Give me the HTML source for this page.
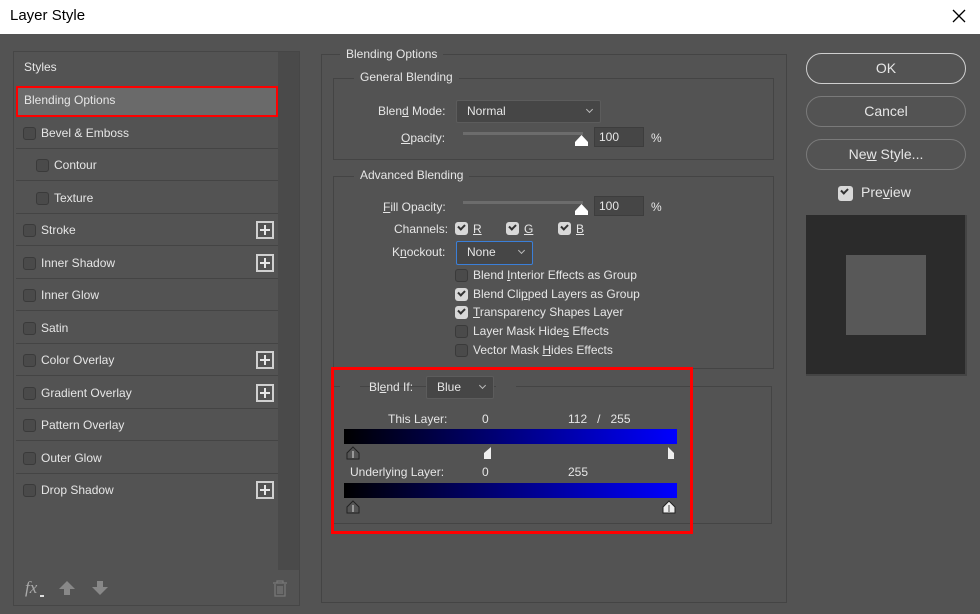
<!DOCTYPE html>
<html><head><meta charset="utf-8"><style>
*{margin:0;padding:0;box-sizing:border-box}
body{width:980px;height:614px;background:#535353;font-family:"Liberation Sans",sans-serif;font-size:12px;color:#e6e6e6;position:relative;overflow:hidden}
.a{position:absolute;white-space:nowrap}
.title{left:0;top:0;width:980px;height:34px;background:#fff;color:#000;font-size:15px}
.box{position:absolute;border:1px solid #444}
.leg{position:absolute;background:#535353;padding:0 6px;color:#e6e6e6}
.cb{position:absolute;width:13px;height:13px;border:1px solid #3a3a3a;border-radius:3px;background:#4a4a4a}
.cbc{position:absolute;width:13px;height:13px;border-radius:3px;background:#d8d8d8}
.cbc::after{content:"";position:absolute;left:3px;top:2px;width:5px;height:3px;border-left:2px solid #333;border-bottom:2px solid #333;transform:rotate(-45deg)}
.row{position:absolute;left:16px;width:262px;height:32px;border-bottom:1px solid #444}
.plus{position:absolute;width:18px;height:18px;border:2px solid #d0d0d0;left:255px}
.plus::before{content:"";position:absolute;left:6px;top:2px;width:2px;height:10px;background:#e8e8e8}
.plus::after{content:"";position:absolute;left:2px;top:6px;width:10px;height:2px;background:#e8e8e8}
.btn{position:absolute;left:806px;width:160px;height:31px;border:1px solid #7a7a7a;border-radius:16px;text-align:center;line-height:29px;font-size:14px}
.sel{position:absolute;background:#464646;border:1px solid #5c5c5c;border-radius:2px;padding-left:10px;line-height:20px}
.sel::after{content:"";position:absolute;right:8px;top:6px;width:4px;height:4px;border-right:1px solid #bbb;border-bottom:1px solid #bbb;transform:rotate(45deg)}
.inp{position:absolute;width:50px;height:20px;background:#464646;border:1px solid #3d3d3d;padding-left:4px;line-height:18px}
.grad{position:absolute;left:344px;width:333px;background:linear-gradient(to right,#000,#000080 50%,#0000ff)}
u{text-decoration:underline}
</style></head><body>
<div class="a title"><span style="position:absolute;left:10px;top:7px">Layer Style</span>
<svg style="position:absolute;left:951px;top:8px" width="16" height="16"><path d="M2 2L14 14M14 2L2 14" stroke="#000" stroke-width="1.3"/></svg></div>

<!-- left panel -->
<div class="box" style="left:13px;top:51px;width:287px;height:555px;border-color:#464646"></div>
<div class="a" style="left:278px;top:52px;width:21px;height:518px;background:#4a4a4a"></div>
<div class="a" style="left:24px;top:60px">Styles</div>
<div class="a" style="left:16px;top:86px;width:262px;height:31px;background:#6a6a6a;border:2px solid #f00"></div>
<div class="a" style="left:24px;top:93px">Blending Options</div>
<div class="row" style="top:117px"><div class="cb" style="left:7px;top:10px"></div><span class="a" style="left:25px;top:9px">Bevel &amp; Emboss</span></div>
<div class="row" style="top:149px"><div class="cb" style="left:20px;top:10px"></div><span class="a" style="left:38px;top:9px">Contour</span></div>
<div class="row" style="top:182px"><div class="cb" style="left:20px;top:10px"></div><span class="a" style="left:38px;top:9px">Texture</span></div>
<div class="row" style="top:214px"><div class="cb" style="left:7px;top:10px"></div><span class="a" style="left:25px;top:9px">Stroke</span><div class="plus" style="left:240px;top:7px"></div></div>
<div class="row" style="top:247px"><div class="cb" style="left:7px;top:10px"></div><span class="a" style="left:25px;top:9px">Inner Shadow</span><div class="plus" style="left:240px;top:7px"></div></div>
<div class="row" style="top:279px"><div class="cb" style="left:7px;top:10px"></div><span class="a" style="left:25px;top:9px">Inner Glow</span></div>
<div class="row" style="top:312px"><div class="cb" style="left:7px;top:10px"></div><span class="a" style="left:25px;top:9px">Satin</span></div>
<div class="row" style="top:344px"><div class="cb" style="left:7px;top:10px"></div><span class="a" style="left:25px;top:9px">Color Overlay</span><div class="plus" style="left:240px;top:7px"></div></div>
<div class="row" style="top:377px"><div class="cb" style="left:7px;top:10px"></div><span class="a" style="left:25px;top:9px">Gradient Overlay</span><div class="plus" style="left:240px;top:7px"></div></div>
<div class="row" style="top:409px"><div class="cb" style="left:7px;top:10px"></div><span class="a" style="left:25px;top:9px">Pattern Overlay</span></div>
<div class="row" style="top:442px"><div class="cb" style="left:7px;top:10px"></div><span class="a" style="left:25px;top:9px">Outer Glow</span></div>
<div class="row" style="top:474px;border:none"><div class="cb" style="left:7px;top:10px"></div><span class="a" style="left:25px;top:9px">Drop Shadow</span><div class="plus" style="left:240px;top:7px"></div></div>
<div class="a" style="left:25px;top:578px;font-size:17px;font-style:italic;color:#aaa;font-family:'Liberation Serif',serif">fx</div>
<div class="a" style="left:40px;top:595px;width:4px;height:2px;background:#ddd"></div>
<svg class="a" style="left:58px;top:580px" width="18" height="16"><path d="M9 1L17 9H12V15H6V9H1Z" fill="#888"/></svg>
<svg class="a" style="left:91px;top:580px" width="18" height="16"><path d="M9 15L17 7H12V1H6V7H1Z" fill="#888"/></svg>
<svg class="a" style="left:272px;top:580px" width="16" height="17"><path d="M1 3H15M5 3V1H11V3M3 4V16H13V4M6 6V14M8 6V14M10 6V14" stroke="#777" fill="none" stroke-width="1.3"/></svg>

<!-- middle -->
<div class="box" style="left:321px;top:54px;width:466px;height:549px"></div>
<div class="leg" style="left:340px;top:47px">Blending Options</div>
<div class="box" style="left:333px;top:78px;width:441px;height:82px"></div>
<div class="leg" style="left:354px;top:70px">General Blending</div>
<div class="a" style="left:378px;top:104px">Blen<u>d</u> Mode:</div>
<div class="sel" style="left:456px;top:100px;width:145px;height:23px">Normal</div>
<div class="a" style="left:401px;top:131px"><u>O</u>pacity:</div>
<div class="a" style="left:463px;top:132px;width:120px;height:3px;background:#6c6c6c"></div>
<svg class="a" style="left:574px;top:134px" width="15" height="13"><path d="M7.5 1L14 8V12H1V8Z" fill="#fff"/></svg>
<div class="inp" style="left:594px;top:127px">100</div>
<div class="a" style="left:651px;top:131px">%</div>

<div class="box" style="left:333px;top:176px;width:441px;height:193px"></div>
<div class="leg" style="left:354px;top:168px">Advanced Blending</div>
<div class="a" style="left:383px;top:200px"><u>F</u>ill Opacity:</div>
<div class="a" style="left:463px;top:201px;width:120px;height:3px;background:#6c6c6c"></div>
<svg class="a" style="left:574px;top:203px" width="15" height="13"><path d="M7.5 1L14 8V12H1V8Z" fill="#fff"/></svg>
<div class="inp" style="left:594px;top:196px">100</div>
<div class="a" style="left:651px;top:200px">%</div>
<div class="a" style="left:394px;top:222px">Channels:</div>
<div class="cbc" style="left:455px;top:222px"></div><div class="a" style="left:473px;top:222px"><u>R</u></div>
<div class="cbc" style="left:506px;top:222px"></div><div class="a" style="left:524px;top:222px"><u>G</u></div>
<div class="cbc" style="left:558px;top:222px"></div><div class="a" style="left:576px;top:222px"><u>B</u></div>
<div class="a" style="left:392px;top:245px">K<u>n</u>ockout:</div>
<div class="sel" style="left:456px;top:241px;width:77px;height:24px;border-color:#3b7fd8">None</div>
<div class="cb" style="left:455px;top:269px"></div><div class="a" style="left:473px;top:268px">Blend <u>I</u>nterior Effects as Group</div>
<div class="cbc" style="left:455px;top:288px"></div><div class="a" style="left:473px;top:287px">Blend Cli<u>p</u>ped Layers as Group</div>
<div class="cbc" style="left:455px;top:306px"></div><div class="a" style="left:473px;top:305px"><u>T</u>ransparency Shapes Layer</div>
<div class="cb" style="left:455px;top:325px"></div><div class="a" style="left:473px;top:324px">Layer Mask Hide<u>s</u> Effects</div>
<div class="cb" style="left:455px;top:344px"></div><div class="a" style="left:473px;top:343px">Vector Mask <u>H</u>ides Effects</div>

<div class="box" style="left:333px;top:386px;width:439px;height:138px"></div>
<div class="a" style="left:340px;top:378px;width:20px;height:14px;background:#535353"></div>
<div class="a" style="left:496px;top:378px;width:20px;height:14px;background:#535353"></div>
<div class="a" style="left:369px;top:380px">Bl<u>e</u>nd If:</div>
<div class="sel" style="left:426px;top:376px;width:68px;height:23px">Blue</div>
<div class="a" style="left:388px;top:412px">This Layer:</div>
<div class="a" style="left:482px;top:412px">0</div>
<div class="a" style="left:568px;top:412px">112&nbsp;&nbsp;&nbsp;/&nbsp;&nbsp;&nbsp;255</div>
<div class="grad" style="top:429px;height:15px"></div>
<svg class="a" style="left:345px;top:446px" width="16" height="14"><path d="M8 1L14 7V13H2V7Z" fill="#555" stroke="#222"/><path d="M8 5V12" stroke="#999" stroke-width="2"/></svg>
<svg class="a" style="left:483px;top:446px" width="10" height="14"><path d="M8 1V13H1V7Z" fill="#eee"/></svg>
<svg class="a" style="left:667px;top:446px" width="10" height="14"><path d="M1 1V13H7V7Z" fill="#eee"/></svg>
<div class="a" style="left:350px;top:465px">Underlying Layer:</div>
<div class="a" style="left:482px;top:465px">0</div>
<div class="a" style="left:568px;top:465px">255</div>
<div class="grad" style="top:483px;height:15px"></div>
<svg class="a" style="left:345px;top:500px" width="16" height="14"><path d="M8 1L14 7V13H2V7Z" fill="#555" stroke="#222"/><path d="M8 5V12" stroke="#999" stroke-width="2"/></svg>
<svg class="a" style="left:661px;top:500px" width="16" height="14"><path d="M8 1L14 7V13H2V7Z" fill="#eee" stroke="#222"/><path d="M8 5V12" stroke="#999" stroke-width="2"/></svg>
<div class="a" style="left:331px;top:367px;width:362px;height:167px;border:3px solid #f00"></div>

<!-- right -->
<div class="btn" style="top:53px;border-color:#cfcfcf">OK</div>
<div class="btn" style="top:96px">Cancel</div>
<div class="btn" style="top:139px">Ne<u>w</u> Style...</div>
<div class="cbc" style="left:838px;top:186px;width:15px;height:15px"></div>
<div class="a" style="left:861px;top:184px;font-size:14px">Pre<u>v</u>iew</div>
<div class="a" style="left:806px;top:215px;width:161px;height:161px;background:#2b2b2b;border-right:2px solid #444;border-bottom:2px solid #444"></div>
<div class="a" style="left:846px;top:255px;width:80px;height:80px;background:#585858"></div>
</body></html>
